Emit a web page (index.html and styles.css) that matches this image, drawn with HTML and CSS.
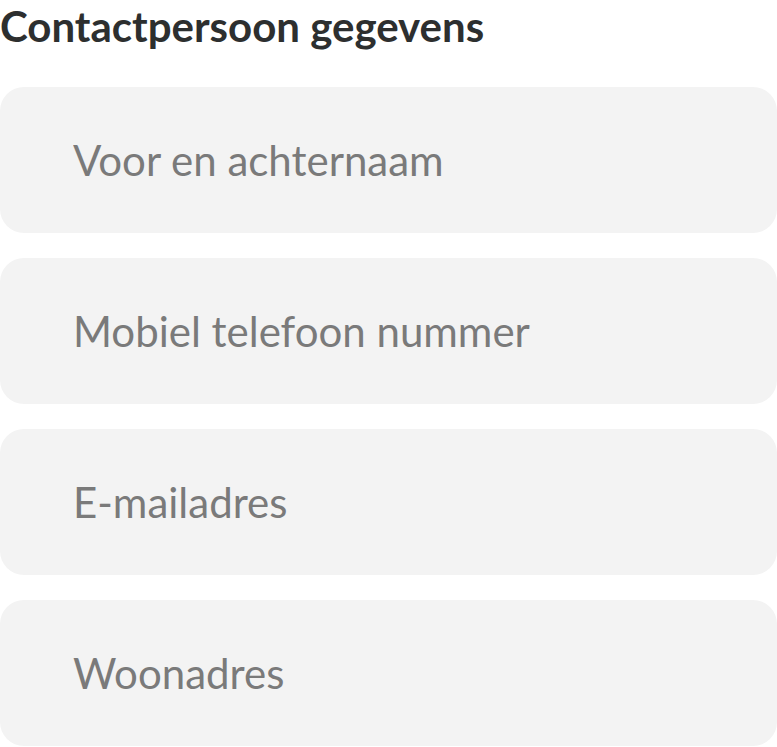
FILE: index.html
```html
<!DOCTYPE html>
<html lang="nl">
<head>
<meta charset="utf-8">
<link rel="stylesheet" href="styles.css">
</head>
<body>
<main class="form">
  <h2 class="title">Contactpersoon gegevens</h2>
  <div class="fields">
    <input class="field" type="text" placeholder="Voor en achternaam">
    <input class="field" type="tel" placeholder="Mobiel telefoon nummer">
    <input class="field" type="email" placeholder="E-mailadres">
    <input class="field" type="text" placeholder="Woonadres">
  </div>
</main>
</body>
</html>
```
FILE: styles.css
```css
html, body {
  margin: 0;
  padding: 0;
  background: #ffffff;
}
.form {
  width: 777px;
  font-family: Lato, "Open Sans", sans-serif;
}
.title {
  margin: 0;
  padding-top: 2px;
  font-size: 42px;
  font-weight: 700;
  line-height: 48px;
  color: #2d2f2f;
}
.fields {
  margin-top: 37px;
  display: flex;
  flex-direction: column;
  gap: 25px;
}
.field {
  box-sizing: border-box;
  display: block;
  width: 777px;
  height: 146px;
  margin: 0;
  padding: 0 0 0 73px;
  border: none;
  border-radius: 24px;
  background: #f3f3f3;
  font-family: Lato, "Open Sans", sans-serif;
  font-size: 42px;
  color: #333;
  outline: none;
}
.field::placeholder {
  color: #7a7a7a;
  opacity: 1;
}
```
